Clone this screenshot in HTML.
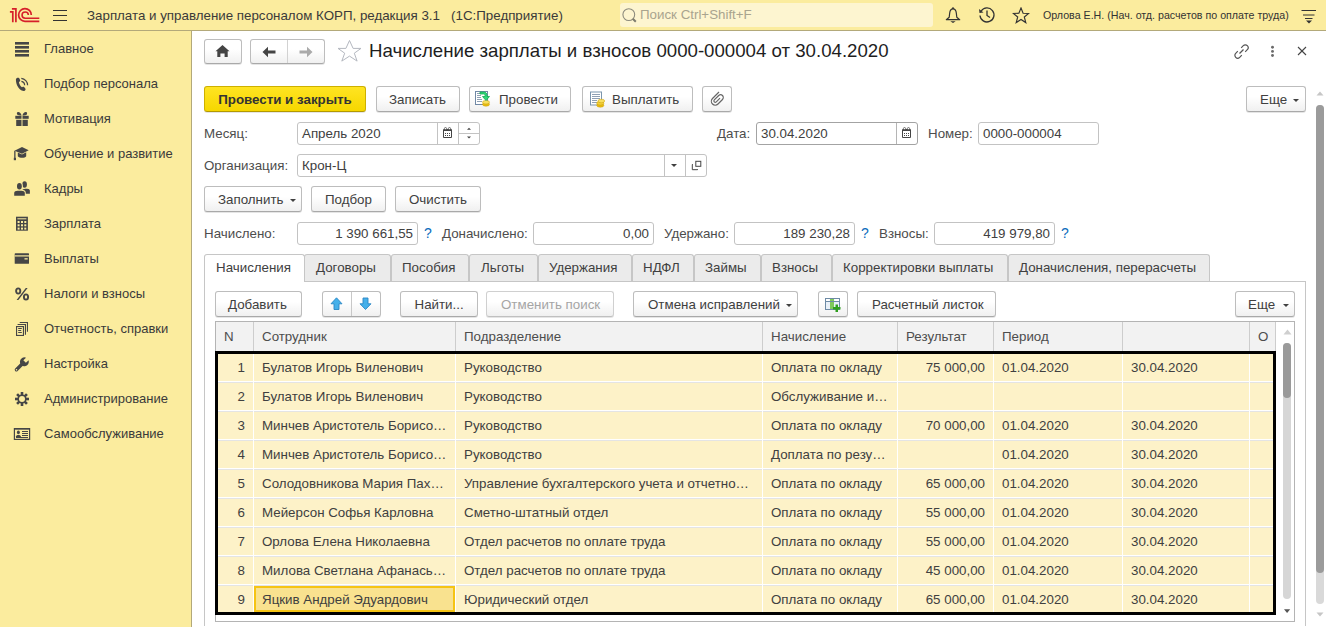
<!DOCTYPE html>
<html><head><meta charset="utf-8">
<style>
*{box-sizing:border-box}
html,body{margin:0;padding:0}
body{width:1326px;height:627px;overflow:hidden;position:relative;background:#fff;font-family:"Liberation Sans",sans-serif;font-size:13.33px;color:#4d4d4d}
.a{position:absolute}
.t{position:absolute;white-space:nowrap;line-height:15px;font-size:13.33px}
#hdr{left:0;top:0;width:1326px;height:31px;background:#fbec9e;border-bottom:1px solid #b3a97a}
#side{left:0;top:31px;width:192px;height:596px;background:#fbec9e;border-right:1px solid #b3a97a}
.btn{position:absolute;height:26px;border:1px solid #bdbdbd;border-bottom-color:#a9a9a9;border-radius:3px;background:linear-gradient(#ffffff 40%,#f0f0f0);box-shadow:0 1px 0 rgba(0,0,0,.10);color:#404040;white-space:nowrap;line-height:25px;text-align:left}
.btn2{height:26px;line-height:26px}
.fld{position:absolute;height:23px;border:1px solid #c3c3c3;border-radius:3px;background:#fff;color:#404040;line-height:21px;white-space:nowrap;padding:0 4px}
.lbl{position:absolute;white-space:nowrap;line-height:15px;color:#4d4d4d}
.q{position:absolute;color:#0b6cbc;line-height:15px;font-size:14px}
.tab{position:absolute;top:254px;height:27px;border:1px solid #c6c6c6;border-bottom:none;background:#ebebeb;border-radius:3px 3px 0 0}
.dv{position:absolute;width:1px;background:#d2d2d2}
.dd{position:absolute;width:0;height:0;border-left:3px solid transparent;border-right:3px solid transparent;border-top:3px solid #404040}
</style></head><body>

<!-- HEADER -->
<div id="hdr" class="a"></div>
<svg class="a" style="left:0px;top:0px" width="42" height="30" viewBox="0 0 42 30">
  <path d="M9.9 11.9 H12.8 V22.2 M11.9 8.8 H15.9 V22.2" fill="none" stroke="#d61f2a" stroke-width="1.7"/>
  <path d="M39.3 21.3 L25 21.3 A6.35 6.35 0 1 1 31.3 14.95" fill="none" stroke="#d61f2a" stroke-width="1.7"/>
  <path d="M39.3 18.25 L25.2 18.25 A3.15 3.15 0 1 1 28.35 15.1" fill="none" stroke="#d61f2a" stroke-width="1.6"/>
</svg>
<svg class="a" style="left:53px;top:9px" width="14" height="13"><g stroke="#333" stroke-width="1"><line x1="0" y1="1.5" x2="14" y2="1.5"/><line x1="0" y1="6.5" x2="14" y2="6.5"/><line x1="0" y1="11.5" x2="14" y2="11.5"/></g></svg>
<div class="t" style="left:87px;top:8px;color:#3a3a3a">Зарплата и управление персоналом КОРП, редакция 3.1&nbsp;&nbsp;&nbsp;(1С:Предприятие)</div>
<div class="a" style="left:620px;top:3px;width:313px;height:24px;background:#fdf5d0;border-radius:3px"></div>
<svg class="a" style="left:621px;top:7px" width="17" height="17"><circle cx="7.8" cy="7.6" r="5.9" fill="none" stroke="#8d8b7d" stroke-width="1.1"/><line x1="11.8" y1="11.8" x2="14.8" y2="14.8" stroke="#7d7b6d" stroke-width="2"/></svg>
<div class="t" style="left:640px;top:7px;color:#a9a48e">Поиск Ctrl+Shift+F</div>
<!-- bell -->
<svg class="a" style="left:945px;top:6px" width="17" height="18" viewBox="0 0 17 18"><path d="M8 2.8 C5.9 2.8 4.9 4.6 4.7 7 L4.2 11.3 L1.3 13.7 L14.7 13.7 L11.8 11.3 L11.3 7 C11.1 4.6 10.1 2.8 8 2.8 Z" fill="none" stroke="#333" stroke-width="1.2" stroke-linejoin="round"/><circle cx="8" cy="2.2" r="1" fill="#333"/><path d="M5.3 15.2 L10.7 15.2 L8 16.9 Z" fill="#333"/></svg>
<!-- history -->
<svg class="a" style="left:978px;top:6px" width="18" height="18" viewBox="0 0 18 18"><path d="M3.2 5 A7 7 0 1 1 2 9.5" fill="none" stroke="#333" stroke-width="1.3"/><path d="M1 3 L1.5 7 L5.5 6.5 Z" fill="#333"/><path d="M9 4.5 L9 9.5 L12 11.5" fill="none" stroke="#333" stroke-width="1.3"/></svg>
<!-- star -->
<svg class="a" style="left:1012px;top:7px" width="18" height="17" viewBox="0 0 18 17"><path d="M9 1 L11.1 6.2 L16.6 6.5 L12.3 10 L13.8 15.6 L9 12.5 L4.2 15.6 L5.7 10 L1.4 6.5 L6.9 6.2 Z" fill="none" stroke="#333" stroke-width="1.15" stroke-linejoin="miter"/></svg>
<div class="t" style="left:1043px;top:8px;color:#333;font-size:10.67px">Орлова Е.Н. (Нач. отд. расчетов по оплате труда)</div>
<svg class="a" style="left:1301px;top:9px" width="16" height="15"><g stroke="#333" stroke-width="1"><line x1="0.5" y1="1.5" x2="15" y2="1.5"/><line x1="2" y1="6" x2="13.5" y2="6"/><line x1="4" y1="9.5" x2="11.5" y2="9.5"/></g><path d="M5 11.5 L11 11.5 L8 14.5 Z" fill="#333"/></svg>

<!-- SIDEBAR -->
<div id="side" class="a"></div>
<div class="t" style="left:44px;top:41px;color:#3a3a3a;font-size:13px">Главное</div>
<svg class="a" style="left:15px;top:42px" width="17" height="16" viewBox="0 0 17 16" overflow="visible"><g fill="#464646"><rect x="0" y="0" width="14" height="2.6"/><rect x="0" y="4" width="14" height="2.6"/><rect x="0" y="8" width="14" height="2.6"/><rect x="0" y="12" width="14" height="2.6"/></g></svg>
<div class="t" style="left:44px;top:76px;color:#3a3a3a;font-size:13px">Подбор персонала</div>
<svg class="a" style="left:15px;top:77px" width="17" height="16" viewBox="0 0 17 16" overflow="visible"><path d="M0.9 2.4 C0.9 1.4 2.2 0.7 3.4 0.8 C4 0.9 4.3 1.2 4.5 1.7 L5.2 3.3 C5.4 3.9 5 4.5 4.4 4.8 L3.9 5.1 C4.2 7.2 5.3 9 6.9 10.3 L7.5 9.9 C8 9.6 8.7 9.6 9.1 10 L10.3 11.4 C10.8 12 10.6 12.9 10 13.4 C9.3 13.9 8.5 14 7.6 13.8 C3.6 12.2 0.9 7.4 0.9 2.4 Z" fill="#464646"/><path d="M6.3 1.3 A7 7 0 0 1 12.6 8.3 M6.4 4.3 A4 4 0 0 1 9.6 8.3" fill="none" stroke="#464646" stroke-width="1.2"/></svg>
<div class="t" style="left:44px;top:111px;color:#3a3a3a;font-size:13px">Мотивация</div>
<svg class="a" style="left:15px;top:112px" width="17" height="16" viewBox="0 0 17 16" overflow="visible"><g fill="#464646"><rect x="0.3" y="3.8" width="6.2" height="3"/><rect x="7.5" y="3.8" width="6.2" height="3"/><rect x="1.2" y="7.8" width="5.3" height="6.2"/><rect x="7.5" y="7.8" width="5.3" height="6.2"/><path d="M6.6 3.6 C6 1 4.5 -0.2 3 0 C1.8 0.2 1.6 1.6 2.2 2.5 C2.8 3.3 4.5 3.6 6.6 3.6 Z M7.4 3.6 C8 1 9.5 -0.2 11 0 C12.2 0.2 12.4 1.6 11.8 2.5 C11.2 3.3 9.5 3.6 7.4 3.6 Z"/></g></svg>
<div class="t" style="left:44px;top:146px;color:#3a3a3a;font-size:13px">Обучение и развитие</div>
<svg class="a" style="left:15px;top:147px" width="17" height="16" viewBox="0 0 17 16" overflow="visible"><g fill="#464646"><path d="M-0.5 3.8 L7 0 L13.7 3.2 L7 6.8 Z"/><path d="M2.8 5.5 L2.8 9.2 C4.5 11.2 10 11.2 11.2 9.2 L11.2 5.2 L7 7.6 Z"/><rect x="-0.8" y="3.8" width="1.3" height="7.5"/><rect x="-1.2" y="10.8" width="2.2" height="2.4"/></g></svg>
<div class="t" style="left:44px;top:181px;color:#3a3a3a;font-size:13px">Кадры</div>
<svg class="a" style="left:15px;top:182px" width="17" height="16" viewBox="0 0 17 16" overflow="visible"><g fill="#464646"><ellipse cx="9.6" cy="2.5" rx="2.3" ry="3.2"/><path d="M7.5 7.8 C9 6.5 13 6.5 14.3 7.4 C14.8 7.8 14.9 8.4 14.9 9 L14.9 11.8 L8 11.8 Z"/></g><g fill="#fbec9e" stroke="#fbec9e" stroke-width="2"><ellipse cx="4.4" cy="4.3" rx="2.4" ry="3.2"/><path d="M-0.8 11 C-0.8 9.6 0.7 8.7 2.5 8.7 L6.5 8.7 C8.3 8.7 9.8 9.6 9.8 11 L9.8 13.8 L-0.8 13.8 Z"/></g><g fill="#464646"><ellipse cx="4.4" cy="4.3" rx="2.4" ry="3.2"/><path d="M-0.8 11 C-0.8 9.6 0.7 8.7 2.5 8.7 L6.5 8.7 C8.3 8.7 9.8 9.6 9.8 11 L9.8 13.8 L-0.8 13.8 Z"/></g></svg>
<div class="t" style="left:44px;top:216px;color:#3a3a3a;font-size:13px">Зарплата</div>
<svg class="a" style="left:15px;top:217px" width="17" height="16" viewBox="0 0 17 16" overflow="visible"><g fill="#464646"><rect x="1" y="-0.3" width="11.9" height="14"/></g><g fill="#fbec9e"><rect x="2.4" y="1.3" width="9" height="1"/><rect x="2.6" y="4" width="2" height="2"/><rect x="6" y="4" width="2" height="2"/><rect x="9.3" y="4" width="2" height="2"/><rect x="2.6" y="7.3" width="2" height="2"/><rect x="6" y="7.3" width="2" height="2"/><rect x="9.3" y="7.3" width="2" height="2"/><rect x="2.6" y="10.6" width="2" height="2"/><rect x="6" y="10.6" width="2" height="2"/><rect x="9.3" y="10.6" width="2" height="2"/></g></svg>
<div class="t" style="left:44px;top:251px;color:#3a3a3a;font-size:13px">Выплаты</div>
<svg class="a" style="left:15px;top:252px" width="17" height="16" viewBox="0 0 17 16" overflow="visible"><g fill="#464646"><rect x="-0.3" y="1.3" width="14.3" height="10.5" rx="0.6"/></g><g fill="#fbec9e"><rect x="-0.3" y="3.3" width="14.3" height="1.2"/><rect x="9.5" y="6.2" width="3.2" height="1.3"/></g></svg>
<div class="t" style="left:44px;top:286px;color:#3a3a3a;font-size:13px">Налоги и взносы</div>
<svg class="a" style="left:15px;top:287px" width="17" height="16" viewBox="0 0 17 16" overflow="visible"><g fill="none" stroke="#464646" stroke-width="1.9"><ellipse cx="3.2" cy="4" rx="2.1" ry="2.6"/><ellipse cx="11" cy="10" rx="2.1" ry="2.6"/></g><path d="M10.8 1 L12.6 1 L3.4 13 L1.6 13 Z" fill="#464646"/></svg>
<div class="t" style="left:44px;top:321px;color:#3a3a3a;font-size:13px">Отчетность, справки</div>
<svg class="a" style="left:15px;top:322px" width="17" height="16" viewBox="0 0 17 16" overflow="visible"><g fill="none" stroke="#464646" stroke-width="1.1"><rect x="1.55" y="4.55" width="6.9" height="8.9"/><path d="M2.6 2.55 H10.45 V12.8 M4.7 0.55 H12.45 V9.8"/></g><g stroke="#464646" stroke-width="1"><path d="M3.2 6.5 H6.8 M3.2 8.5 H6.2 M3.2 10.5 H6.8"/></g></svg>
<div class="t" style="left:44px;top:356px;color:#3a3a3a;font-size:13px">Настройка</div>
<svg class="a" style="left:15px;top:357px" width="17" height="16" viewBox="0 0 17 16" overflow="visible"><g transform="translate(9.4 4.8) rotate(45)"><path d="M-1.8 -4.1 A4.5 4.5 0 1 0 1.8 -4.1 L1.8 -0.3 L-1.8 -0.3 Z" fill="#464646"/><rect x="-1.7" y="1.5" width="3.4" height="11.5" rx="1.7" fill="#464646"/><circle cx="0" cy="11.2" r="0.75" fill="#fbec9e"/></g></svg>
<div class="t" style="left:44px;top:391px;color:#3a3a3a;font-size:13px">Администрирование</div>
<svg class="a" style="left:15px;top:392px" width="17" height="16" viewBox="0 0 17 16" overflow="visible"><g transform="translate(7 7)"><g fill="#464646"><circle r="4.6"/><rect x="-1.3" y="-7" width="2.6" height="14"/><rect x="-1.3" y="-7" width="2.6" height="14" transform="rotate(45)"/><rect x="-1.3" y="-7" width="2.6" height="14" transform="rotate(90)"/><rect x="-1.3" y="-7" width="2.6" height="14" transform="rotate(135)"/></g><circle r="3.0" fill="#fbec9e"/></g></svg>
<div class="t" style="left:44px;top:426px;color:#3a3a3a;font-size:13px">Самообслуживание</div>
<svg class="a" style="left:15px;top:427px" width="17" height="16" viewBox="0 0 17 16" overflow="visible"><g fill="none" stroke="#464646" stroke-width="1.2"><rect x="-0.6" y="1.6" width="15.2" height="10.8"/></g><g fill="#464646"><rect x="-0.6" y="1" width="15.2" height="1.6"/><ellipse cx="3.4" cy="5.4" rx="1.5" ry="1.8"/><path d="M0.8 10 C0.8 7.4 6 7.4 6 10 Z"/><rect x="7" y="4" width="6" height="1"/><rect x="7" y="6" width="6" height="1"/><rect x="7" y="8" width="6" height="1"/><rect x="1" y="10" width="12" height="1"/></g></svg>

<!-- TITLE BAR -->
<div class="btn" style="left:204px;top:39px;width:38px;height:25px"></div>
<svg class="a" style="left:215px;top:44px" width="16" height="14" viewBox="0 0 16 14"><path d="M7.5 1 L14.5 7.2 L12.7 7.2 L12.7 13 L9.6 13 L9.6 9.6 L5.4 9.6 L5.4 13 L2.3 13 L2.3 7.2 L0.5 7.2 Z" fill="#444"/></svg>
<div class="btn" style="left:250px;top:39px;width:75px;height:25px"></div>
<div class="dv" style="left:287px;top:40px;height:23px"></div>
<svg class="a" style="left:262px;top:46px" width="14" height="12" viewBox="0 0 14 12"><path d="M0.5 6 L6 0.8 L6 4.5 L13.5 4.5 L13.5 7.5 L6 7.5 L6 11.2 Z" fill="#444"/></svg>
<svg class="a" style="left:299px;top:46px" width="14" height="12" viewBox="0 0 14 12"><path d="M13.5 6 L8 0.8 L8 4.5 L0.5 4.5 L0.5 7.5 L8 7.5 L8 11.2 Z" fill="#aaa"/></svg>
<svg class="a" style="left:337px;top:39px" width="26" height="24" viewBox="0 0 26 24"><path d="M12.5 1.5 L16.1 9.4 L24 9.4 L17.3 14.2 L20.1 22.1 L12.5 17.1 L4.8 22.1 L7.7 14.2 L1 9.4 L8.9 9.4 Z" fill="none" stroke="#b4b8c0" stroke-width="1" stroke-linejoin="miter"/></svg>
<div class="t" style="left:369px;top:40px;font-size:18.67px;line-height:22px;color:#1e1e1e">Начисление зарплаты и взносов 0000-000004 от 30.04.2020</div>
<!-- link icon -->
<svg class="a" style="left:1233px;top:43px" width="17" height="17" viewBox="0 0 17 17"><g fill="none" stroke="#555" stroke-width="1.2"><path d="M6.5 10.5 L10.5 6.5"/><path d="M8.2 4.8 L10.3 2.7 A2.7 2.7 0 0 1 14.3 6.7 L12.2 8.8"/><path d="M4.8 8.2 L2.7 10.3 A2.7 2.7 0 0 0 6.7 14.3 L8.8 12.2"/></g></svg>
<svg class="a" style="left:1270px;top:45px" width="5" height="13"><circle cx="2.5" cy="2.3" r="1.45" fill="#6a6a6a"/><circle cx="2.5" cy="6.4" r="1.45" fill="#6a6a6a"/><circle cx="2.5" cy="10.5" r="1.45" fill="#6a6a6a"/></svg>
<svg class="a" style="left:1297px;top:46px" width="10" height="10"><g stroke="#444" stroke-width="1.1"><line x1="1" y1="1" x2="9" y2="9"/><line x1="9" y1="1" x2="1" y2="9"/></g></svg>

<!-- MAIN TOOLBAR -->
<div class="btn" style="left:204px;top:86px;width:162px;background:linear-gradient(#ffe422,#f6d700);border-color:#cdb000;border-bottom-color:#b39900;color:#333;font-weight:bold;text-align:center">Провести и закрыть</div>
<div class="btn" style="left:376px;top:86px;width:84px;padding-left:12px">Записать</div>
<div class="btn" style="left:469px;top:86px;width:102px;padding-left:29px">Провести</div>
<svg class="a" style="left:474px;top:90px" width="18" height="18" viewBox="0 0 18 18">
  <rect x="1.5" y="1.5" width="12" height="13" fill="#fff" stroke="#7189a6" stroke-width="1"/>
  <g stroke="#8fa0b3" stroke-width="1"><line x1="3" y1="3.5" x2="6" y2="3.5"/><line x1="3" y1="5.5" x2="7" y2="5.5"/><line x1="3" y1="7.5" x2="7" y2="7.5"/><line x1="3" y1="9.5" x2="8" y2="9.5"/><line x1="3" y1="11.5" x2="8" y2="11.5"/></g>
  <ellipse cx="12" cy="14.3" rx="3.5" ry="1.9" fill="#e9bd12" stroke="#c99a00" stroke-width="0.5"/><ellipse cx="12" cy="12.2" rx="3.5" ry="1.8" fill="#f8df5e" stroke="#c99a00" stroke-width="0.5"/>
  <path d="M6 2 L9.5 2 C12 2 13 3.5 13 5.5 L13 6.5 L15.5 6.5 L12 10.5 L8.5 6.5 L11 6.5 L11 5.5 C11 4.5 10.5 4 9.5 4 L6 4 Z" fill="#2ed87a" stroke="#14a850" stroke-width="0.8"/>
</svg>
<div class="btn" style="left:582px;top:86px;width:111px;padding-left:29px">Выплатить</div>
<svg class="a" style="left:589px;top:91px" width="18" height="18" viewBox="0 0 18 18">
  <rect x="1.5" y="1" width="11" height="13" fill="#fff" stroke="#7b95ad" stroke-width="1"/>
  <g stroke="#8fa0b3" stroke-width="1"><line x1="3" y1="3.5" x2="11" y2="3.5"/><line x1="3" y1="5.5" x2="11" y2="5.5"/><line x1="3" y1="7.5" x2="11" y2="7.5"/><line x1="3" y1="9.5" x2="8" y2="9.5"/><line x1="3" y1="11.5" x2="8" y2="11.5"/></g>
  <ellipse cx="11.3" cy="14.3" rx="3.6" ry="1.9" fill="#e9bd12" stroke="#c99a00" stroke-width="0.5"/><ellipse cx="11.3" cy="12.2" rx="3.6" ry="1.9" fill="#f3d03a" stroke="#c99a00" stroke-width="0.5"/><ellipse cx="12.3" cy="10" rx="3.4" ry="1.8" fill="#f8df5e" stroke="#c99a00" stroke-width="0.5"/>
</svg>
<div class="btn" style="left:702px;top:86px;width:30px"></div>
<svg class="a" style="left:709px;top:90px" width="16" height="17" viewBox="0 0 16 17"><path d="M10 2 L3.5 8.5 C2 10 2 12.5 3.5 14 C5 15.5 7.5 15.5 9 14 L13.5 9.5 C14.5 8.5 14.5 6.5 13.5 5.5 C12.5 4.5 10.7 4.5 9.7 5.5 L5.3 9.9 C4.8 10.4 4.8 11.4 5.3 11.9 C5.8 12.4 6.8 12.4 7.3 11.9 L11 8.2" fill="none" stroke="#666" stroke-width="1.2"/></svg>
<div class="btn" style="left:1246px;top:86px;width:60px;padding-left:13px">Еще</div>
<div class="dd" style="left:1293px;top:99px"></div>

<!-- MONTH ROW -->
<div class="lbl" style="left:204px;top:126px">Месяц:</div>
<div class="fld" style="left:297px;top:122px;width:183px">Апрель 2020</div>
<div class="dv" style="left:437px;top:123px;height:21px;background:#c3c3c3"></div>
<div class="dv" style="left:458px;top:123px;height:21px;background:#c3c3c3"></div>
<div class="a" style="left:459px;top:133px;width:20px;height:1px;background:#c3c3c3"></div>
<svg class="a" style="left:443px;top:127px" width="10" height="11" viewBox="0 0 10 11"><path d="M1 2 H8 A1 1 0 0 1 9 3 V10 A1 1 0 0 1 8 11 H1 A1 1 0 0 1 0 10 V3 A1 1 0 0 1 1 2 Z" fill="#454545"/><rect x="1" y="4" width="7" height="6" fill="#fff"/><g fill="#454545"><rect x="2" y="6" width="1" height="1"/><rect x="4" y="6" width="1" height="1"/><rect x="6" y="6" width="1" height="1"/><rect x="2" y="8" width="1" height="1"/><rect x="4" y="8" width="1" height="1"/><rect x="6" y="8" width="1" height="1"/></g><circle cx="2.5" cy="1.6" r="1.1" fill="#fff" stroke="#454545" stroke-width="0.7"/><circle cx="6.5" cy="1.6" r="1.1" fill="#fff" stroke="#454545" stroke-width="0.7"/></svg>
<svg class="a" style="left:466px;top:127px" width="6" height="12"><path d="M1 2.8 L3 0.8 L5 2.8 Z M1 9.5 L3 11.5 L5 9.5 Z" fill="#444"/></svg>
<div class="lbl" style="left:717px;top:126px">Дата:</div>
<div class="fld" style="left:756px;top:122px;width:162px;border-color:#a3a3a3">30.04.2020</div>
<div class="dv" style="left:896px;top:123px;height:21px;background:#b5b5b5"></div>
<svg class="a" style="left:902px;top:127px" width="10" height="11" viewBox="0 0 10 11"><path d="M1 2 H8 A1 1 0 0 1 9 3 V10 A1 1 0 0 1 8 11 H1 A1 1 0 0 1 0 10 V3 A1 1 0 0 1 1 2 Z" fill="#454545"/><rect x="1" y="4" width="7" height="6" fill="#fff"/><g fill="#454545"><rect x="2" y="6" width="1" height="1"/><rect x="4" y="6" width="1" height="1"/><rect x="6" y="6" width="1" height="1"/><rect x="2" y="8" width="1" height="1"/><rect x="4" y="8" width="1" height="1"/><rect x="6" y="8" width="1" height="1"/></g><circle cx="2.5" cy="1.6" r="1.1" fill="#fff" stroke="#454545" stroke-width="0.7"/><circle cx="6.5" cy="1.6" r="1.1" fill="#fff" stroke="#454545" stroke-width="0.7"/></svg>
<div class="lbl" style="left:928px;top:126px">Номер:</div>
<div class="fld" style="left:978px;top:122px;width:121px">0000-000004</div>

<!-- ORG ROW -->
<div class="lbl" style="left:204px;top:158px">Организация:</div>
<div class="fld" style="left:297px;top:154px;width:410px">Крон-Ц</div>
<div class="dv" style="left:664px;top:155px;height:21px;background:#c3c3c3"></div>
<div class="dv" style="left:685px;top:155px;height:21px;background:#c3c3c3"></div>
<div class="dd" style="left:671px;top:164px"></div>
<svg class="a" style="left:691px;top:160px" width="11" height="11" viewBox="0 0 11 11"><rect x="4.8" y="1.3" width="5" height="5" fill="none" stroke="#444" stroke-width="1"/><path d="M2 4.5 H1.3 V9.7 H6.5 V9" fill="none" stroke="#444" stroke-width="1"/></svg>

<!-- FILL BUTTONS -->
<div class="btn" style="left:204px;top:186px;width:98px;padding-left:13px">Заполнить</div>
<div class="dd" style="left:290px;top:199px"></div>
<div class="btn" style="left:311px;top:186px;width:75px;padding-left:13px">Подбор</div>
<div class="btn" style="left:395px;top:186px;width:86px;padding-left:13px">Очистить</div>

<!-- TOTALS -->
<div class="lbl" style="left:204px;top:226px">Начислено:</div>
<div class="fld" style="left:297px;top:222px;width:121px;text-align:right">1 390 661,55</div>
<div class="q" style="left:424px;top:226px">?</div>
<div class="lbl" style="left:442px;top:226px">Доначислено:</div>
<div class="fld" style="left:533px;top:222px;width:121px;text-align:right">0,00</div>
<div class="lbl" style="left:664px;top:226px">Удержано:</div>
<div class="fld" style="left:734px;top:222px;width:121px;text-align:right">189 230,28</div>
<div class="q" style="left:861px;top:226px">?</div>
<div class="lbl" style="left:879px;top:226px">Взносы:</div>
<div class="fld" style="left:934px;top:222px;width:121px;text-align:right">419 979,80</div>
<div class="q" style="left:1061px;top:226px">?</div>

<!-- TABS -->
<div class="a" style="left:204px;top:281px;width:1102px;height:345px;border:1px solid #c6c6c6;border-bottom:none"></div>
<div class="tab" style="left:304px;width:87px"></div>
<div class="t" style="left:316px;top:260px;color:#404040">Договоры</div>
<div class="tab" style="left:391px;width:78px"></div>
<div class="t" style="left:402px;top:260px;color:#404040">Пособия</div>
<div class="tab" style="left:469px;width:69px"></div>
<div class="t" style="left:481px;top:260px;color:#404040">Льготы</div>
<div class="tab" style="left:538px;width:94px"></div>
<div class="t" style="left:549px;top:260px;color:#404040">Удержания</div>
<div class="tab" style="left:632px;width:62px"></div>
<div class="t" style="left:643px;top:260px;color:#404040">НДФЛ</div>
<div class="tab" style="left:694px;width:67px"></div>
<div class="t" style="left:705px;top:260px;color:#404040">Займы</div>
<div class="tab" style="left:761px;width:71px"></div>
<div class="t" style="left:772px;top:260px;color:#404040">Взносы</div>
<div class="tab" style="left:832px;width:176px"></div>
<div class="t" style="left:843px;top:260px;color:#404040">Корректировки выплаты</div>
<div class="tab" style="left:1008px;width:202px"></div>
<div class="t" style="left:1019px;top:260px;color:#404040">Доначисления, перерасчеты</div>
<div class="tab" style="left:204px;width:101px;height:28px;background:#fff"></div>
<div class="t" style="left:216px;top:260px;color:#404040">Начисления</div>

<!-- TABLE TOOLBAR -->
<div class="btn btn2" style="left:215px;top:291px;width:87px;padding-left:12px">Добавить</div>
<div class="btn btn2" style="left:322px;top:291px;width:59px"></div>
<div class="dv" style="left:351px;top:292px;height:24px;background:#c8c8c8"></div>
<svg class="a" style="left:330px;top:297px" width="14" height="14" viewBox="0 0 14 14"><path d="M6.5 0.8 L12 6.8 L9 6.8 L9 12.5 L4 12.5 L4 6.8 L1 6.8 Z" fill="#45b0ea" stroke="#2a87c5" stroke-width="0.9" stroke-linejoin="miter"/></svg>
<svg class="a" style="left:359px;top:297px" width="14" height="14" viewBox="0 0 14 14"><path d="M6.5 12.5 L12 6.8 L9 6.8 L9 1 L4 1 L4 6.8 L1 6.8 Z" fill="#45b0ea" stroke="#2a87c5" stroke-width="0.9" stroke-linejoin="miter"/></svg>
<div class="btn btn2" style="left:400px;top:291px;width:78px;padding-left:13.5px">Найти...</div>
<div class="btn btn2" style="left:486px;top:291px;width:128px;padding-left:14px;color:#a5a5a5;border-color:#d0d0d0;border-bottom-color:#c0c0c0">Отменить поиск</div>
<div class="btn btn2" style="left:633px;top:291px;width:165px;padding-left:14px">Отмена исправлений</div>
<div class="dd" style="left:786px;top:304px"></div>
<div class="btn btn2" style="left:818px;top:291px;width:30px"></div>
<svg class="a" style="left:824px;top:297px" width="18" height="16" viewBox="0 0 18 16"><rect x="1.5" y="1.5" width="14" height="11" fill="#e8f0f8" stroke="#6d8aa5" stroke-width="1"/><rect x="6" y="2" width="4" height="10" fill="#7ec95a"/><line x1="1.5" y1="4.5" x2="15.5" y2="4.5" stroke="#6d8aa5" stroke-width="1"/><rect x="2" y="2" width="3.5" height="2" fill="#fff"/><rect x="10.5" y="2" width="4.5" height="2" fill="#fff"/><path d="M11.5 7.5 H14 V10 H16.5 V12.5 H14 V15 H11.5 V12.5 H9 V10 H11.5 Z" fill="#2e9e1e"/></svg>
<div class="btn btn2" style="left:857px;top:291px;width:139px;padding-left:14px">Расчетный листок</div>
<div class="btn btn2" style="left:1235px;top:291px;width:60px;padding-left:12px">Еще</div>
<div class="dd" style="left:1283px;top:304px"></div>

<!-- TABLE -->
<div class="a" style="left:215px;top:321px;height:301px;border:1px solid #b4b4b4;width:1080px"></div>
<div class="a" style="left:216px;top:322px;width:1059px;height:29px;background:#f2f2f2"></div>
<div class="a" style="left:1275px;top:322px;width:1px;height:29px;background:#d4d4d4"></div>
<div class="a" style="left:253px;top:322px;width:1px;height:29px;background:#cdcdcd"></div>
<div class="t" style="left:224px;top:329px">N</div>
<div class="a" style="left:455px;top:322px;width:1px;height:29px;background:#cdcdcd"></div>
<div class="t" style="left:262px;top:329px">Сотрудник</div>
<div class="a" style="left:762px;top:322px;width:1px;height:29px;background:#cdcdcd"></div>
<div class="t" style="left:464px;top:329px">Подразделение</div>
<div class="a" style="left:897px;top:322px;width:1px;height:29px;background:#cdcdcd"></div>
<div class="t" style="left:771px;top:329px">Начисление</div>
<div class="a" style="left:993px;top:322px;width:1px;height:29px;background:#cdcdcd"></div>
<div class="t" style="left:906px;top:329px">Результат</div>
<div class="a" style="left:1122px;top:322px;width:1px;height:29px;background:#cdcdcd"></div>
<div class="t" style="left:1002px;top:329px">Период</div>
<div class="a" style="left:1249px;top:322px;width:1px;height:29px;background:#cdcdcd"></div>
<div class="a" style="left:1275px;top:322px;width:1px;height:29px;background:#cdcdcd"></div>
<div class="t" style="left:1258px;top:329px">О</div>
<div class="a" style="left:216px;top:354px;width:1059px;height:27px;background:#fdf2c8"></div>
<div class="a" style="left:216px;top:381px;width:1059px;height:1px;background:#ffffff"></div>
<div class="a" style="left:216px;top:382px;width:1059px;height:1px;background:#e4e4e4"></div>
<div class="a" style="left:253px;top:354px;width:1px;height:29px;background:#ffffff"></div>
<div class="a" style="left:455px;top:354px;width:1px;height:29px;background:#ffffff"></div>
<div class="a" style="left:762px;top:354px;width:1px;height:29px;background:#ffffff"></div>
<div class="a" style="left:897px;top:354px;width:1px;height:29px;background:#ffffff"></div>
<div class="a" style="left:993px;top:354px;width:1px;height:29px;background:#ffffff"></div>
<div class="a" style="left:1122px;top:354px;width:1px;height:29px;background:#ffffff"></div>
<div class="a" style="left:1249px;top:354px;width:1px;height:29px;background:#ffffff"></div>
<div class="a" style="left:1275px;top:354px;width:1px;height:29px;background:#ffffff"></div>
<div class="t" style="left:216px;width:29px;text-align:right;top:360px;color:#404040">1</div>
<div class="t" style="left:262px;top:360px;color:#404040">Булатов Игорь Виленович</div>
<div class="t" style="left:464px;top:360px;color:#404040">Руководство</div>
<div class="t" style="left:771px;top:360px;color:#404040">Оплата по окладу</div>
<div class="t" style="left:897px;width:88px;text-align:right;top:360px;color:#404040">75 000,00</div>
<div class="t" style="left:1002px;top:360px;color:#404040">01.04.2020</div>
<div class="t" style="left:1131px;top:360px;color:#404040">30.04.2020</div>
<div class="a" style="left:216px;top:383px;width:1059px;height:27px;background:#fdf2c8"></div>
<div class="a" style="left:216px;top:410px;width:1059px;height:1px;background:#ffffff"></div>
<div class="a" style="left:216px;top:411px;width:1059px;height:1px;background:#e4e4e4"></div>
<div class="a" style="left:253px;top:383px;width:1px;height:29px;background:#ffffff"></div>
<div class="a" style="left:455px;top:383px;width:1px;height:29px;background:#ffffff"></div>
<div class="a" style="left:762px;top:383px;width:1px;height:29px;background:#ffffff"></div>
<div class="a" style="left:897px;top:383px;width:1px;height:29px;background:#ffffff"></div>
<div class="a" style="left:993px;top:383px;width:1px;height:29px;background:#ffffff"></div>
<div class="a" style="left:1122px;top:383px;width:1px;height:29px;background:#ffffff"></div>
<div class="a" style="left:1249px;top:383px;width:1px;height:29px;background:#ffffff"></div>
<div class="a" style="left:1275px;top:383px;width:1px;height:29px;background:#ffffff"></div>
<div class="t" style="left:216px;width:29px;text-align:right;top:389px;color:#404040">2</div>
<div class="t" style="left:262px;top:389px;color:#404040">Булатов Игорь Виленович</div>
<div class="t" style="left:464px;top:389px;color:#404040">Руководство</div>
<div class="t" style="left:771px;top:389px;color:#404040">Обслуживание и…</div>
<div class="a" style="left:216px;top:412px;width:1059px;height:27px;background:#fdf2c8"></div>
<div class="a" style="left:216px;top:439px;width:1059px;height:1px;background:#ffffff"></div>
<div class="a" style="left:216px;top:440px;width:1059px;height:1px;background:#e4e4e4"></div>
<div class="a" style="left:253px;top:412px;width:1px;height:29px;background:#ffffff"></div>
<div class="a" style="left:455px;top:412px;width:1px;height:29px;background:#ffffff"></div>
<div class="a" style="left:762px;top:412px;width:1px;height:29px;background:#ffffff"></div>
<div class="a" style="left:897px;top:412px;width:1px;height:29px;background:#ffffff"></div>
<div class="a" style="left:993px;top:412px;width:1px;height:29px;background:#ffffff"></div>
<div class="a" style="left:1122px;top:412px;width:1px;height:29px;background:#ffffff"></div>
<div class="a" style="left:1249px;top:412px;width:1px;height:29px;background:#ffffff"></div>
<div class="a" style="left:1275px;top:412px;width:1px;height:29px;background:#ffffff"></div>
<div class="t" style="left:216px;width:29px;text-align:right;top:418px;color:#404040">3</div>
<div class="t" style="left:262px;top:418px;color:#404040">Минчев Аристотель Борисо…</div>
<div class="t" style="left:464px;top:418px;color:#404040">Руководство</div>
<div class="t" style="left:771px;top:418px;color:#404040">Оплата по окладу</div>
<div class="t" style="left:897px;width:88px;text-align:right;top:418px;color:#404040">70 000,00</div>
<div class="t" style="left:1002px;top:418px;color:#404040">01.04.2020</div>
<div class="t" style="left:1131px;top:418px;color:#404040">30.04.2020</div>
<div class="a" style="left:216px;top:441px;width:1059px;height:27px;background:#fdf2c8"></div>
<div class="a" style="left:216px;top:468px;width:1059px;height:1px;background:#ffffff"></div>
<div class="a" style="left:216px;top:469px;width:1059px;height:1px;background:#e4e4e4"></div>
<div class="a" style="left:253px;top:441px;width:1px;height:29px;background:#ffffff"></div>
<div class="a" style="left:455px;top:441px;width:1px;height:29px;background:#ffffff"></div>
<div class="a" style="left:762px;top:441px;width:1px;height:29px;background:#ffffff"></div>
<div class="a" style="left:897px;top:441px;width:1px;height:29px;background:#ffffff"></div>
<div class="a" style="left:993px;top:441px;width:1px;height:29px;background:#ffffff"></div>
<div class="a" style="left:1122px;top:441px;width:1px;height:29px;background:#ffffff"></div>
<div class="a" style="left:1249px;top:441px;width:1px;height:29px;background:#ffffff"></div>
<div class="a" style="left:1275px;top:441px;width:1px;height:29px;background:#ffffff"></div>
<div class="t" style="left:216px;width:29px;text-align:right;top:447px;color:#404040">4</div>
<div class="t" style="left:262px;top:447px;color:#404040">Минчев Аристотель Борисо…</div>
<div class="t" style="left:464px;top:447px;color:#404040">Руководство</div>
<div class="t" style="left:771px;top:447px;color:#404040">Доплата по резу…</div>
<div class="t" style="left:1002px;top:447px;color:#404040">01.04.2020</div>
<div class="t" style="left:1131px;top:447px;color:#404040">30.04.2020</div>
<div class="a" style="left:216px;top:470px;width:1059px;height:27px;background:#fdf2c8"></div>
<div class="a" style="left:216px;top:497px;width:1059px;height:1px;background:#ffffff"></div>
<div class="a" style="left:216px;top:498px;width:1059px;height:1px;background:#e4e4e4"></div>
<div class="a" style="left:253px;top:470px;width:1px;height:29px;background:#ffffff"></div>
<div class="a" style="left:455px;top:470px;width:1px;height:29px;background:#ffffff"></div>
<div class="a" style="left:762px;top:470px;width:1px;height:29px;background:#ffffff"></div>
<div class="a" style="left:897px;top:470px;width:1px;height:29px;background:#ffffff"></div>
<div class="a" style="left:993px;top:470px;width:1px;height:29px;background:#ffffff"></div>
<div class="a" style="left:1122px;top:470px;width:1px;height:29px;background:#ffffff"></div>
<div class="a" style="left:1249px;top:470px;width:1px;height:29px;background:#ffffff"></div>
<div class="a" style="left:1275px;top:470px;width:1px;height:29px;background:#ffffff"></div>
<div class="t" style="left:216px;width:29px;text-align:right;top:476px;color:#404040">5</div>
<div class="t" style="left:262px;top:476px;color:#404040">Солодовникова Мария Пах…</div>
<div class="t" style="left:464px;top:476px;color:#404040">Управление бухгалтерского учета и отчетно…</div>
<div class="t" style="left:771px;top:476px;color:#404040">Оплата по окладу</div>
<div class="t" style="left:897px;width:88px;text-align:right;top:476px;color:#404040">65 000,00</div>
<div class="t" style="left:1002px;top:476px;color:#404040">01.04.2020</div>
<div class="t" style="left:1131px;top:476px;color:#404040">30.04.2020</div>
<div class="a" style="left:216px;top:499px;width:1059px;height:27px;background:#fdf2c8"></div>
<div class="a" style="left:216px;top:526px;width:1059px;height:1px;background:#ffffff"></div>
<div class="a" style="left:216px;top:527px;width:1059px;height:1px;background:#e4e4e4"></div>
<div class="a" style="left:253px;top:499px;width:1px;height:29px;background:#ffffff"></div>
<div class="a" style="left:455px;top:499px;width:1px;height:29px;background:#ffffff"></div>
<div class="a" style="left:762px;top:499px;width:1px;height:29px;background:#ffffff"></div>
<div class="a" style="left:897px;top:499px;width:1px;height:29px;background:#ffffff"></div>
<div class="a" style="left:993px;top:499px;width:1px;height:29px;background:#ffffff"></div>
<div class="a" style="left:1122px;top:499px;width:1px;height:29px;background:#ffffff"></div>
<div class="a" style="left:1249px;top:499px;width:1px;height:29px;background:#ffffff"></div>
<div class="a" style="left:1275px;top:499px;width:1px;height:29px;background:#ffffff"></div>
<div class="t" style="left:216px;width:29px;text-align:right;top:505px;color:#404040">6</div>
<div class="t" style="left:262px;top:505px;color:#404040">Мейерсон Софья Карловна</div>
<div class="t" style="left:464px;top:505px;color:#404040">Сметно-штатный отдел</div>
<div class="t" style="left:771px;top:505px;color:#404040">Оплата по окладу</div>
<div class="t" style="left:897px;width:88px;text-align:right;top:505px;color:#404040">55 000,00</div>
<div class="t" style="left:1002px;top:505px;color:#404040">01.04.2020</div>
<div class="t" style="left:1131px;top:505px;color:#404040">30.04.2020</div>
<div class="a" style="left:216px;top:528px;width:1059px;height:27px;background:#fdf2c8"></div>
<div class="a" style="left:216px;top:555px;width:1059px;height:1px;background:#ffffff"></div>
<div class="a" style="left:216px;top:556px;width:1059px;height:1px;background:#e4e4e4"></div>
<div class="a" style="left:253px;top:528px;width:1px;height:29px;background:#ffffff"></div>
<div class="a" style="left:455px;top:528px;width:1px;height:29px;background:#ffffff"></div>
<div class="a" style="left:762px;top:528px;width:1px;height:29px;background:#ffffff"></div>
<div class="a" style="left:897px;top:528px;width:1px;height:29px;background:#ffffff"></div>
<div class="a" style="left:993px;top:528px;width:1px;height:29px;background:#ffffff"></div>
<div class="a" style="left:1122px;top:528px;width:1px;height:29px;background:#ffffff"></div>
<div class="a" style="left:1249px;top:528px;width:1px;height:29px;background:#ffffff"></div>
<div class="a" style="left:1275px;top:528px;width:1px;height:29px;background:#ffffff"></div>
<div class="t" style="left:216px;width:29px;text-align:right;top:534px;color:#404040">7</div>
<div class="t" style="left:262px;top:534px;color:#404040">Орлова Елена Николаевна</div>
<div class="t" style="left:464px;top:534px;color:#404040">Отдел расчетов по оплате труда</div>
<div class="t" style="left:771px;top:534px;color:#404040">Оплата по окладу</div>
<div class="t" style="left:897px;width:88px;text-align:right;top:534px;color:#404040">55 000,00</div>
<div class="t" style="left:1002px;top:534px;color:#404040">01.04.2020</div>
<div class="t" style="left:1131px;top:534px;color:#404040">30.04.2020</div>
<div class="a" style="left:216px;top:557px;width:1059px;height:27px;background:#fdf2c8"></div>
<div class="a" style="left:216px;top:584px;width:1059px;height:1px;background:#ffffff"></div>
<div class="a" style="left:216px;top:585px;width:1059px;height:1px;background:#e4e4e4"></div>
<div class="a" style="left:253px;top:557px;width:1px;height:29px;background:#ffffff"></div>
<div class="a" style="left:455px;top:557px;width:1px;height:29px;background:#ffffff"></div>
<div class="a" style="left:762px;top:557px;width:1px;height:29px;background:#ffffff"></div>
<div class="a" style="left:897px;top:557px;width:1px;height:29px;background:#ffffff"></div>
<div class="a" style="left:993px;top:557px;width:1px;height:29px;background:#ffffff"></div>
<div class="a" style="left:1122px;top:557px;width:1px;height:29px;background:#ffffff"></div>
<div class="a" style="left:1249px;top:557px;width:1px;height:29px;background:#ffffff"></div>
<div class="a" style="left:1275px;top:557px;width:1px;height:29px;background:#ffffff"></div>
<div class="t" style="left:216px;width:29px;text-align:right;top:563px;color:#404040">8</div>
<div class="t" style="left:262px;top:563px;color:#404040">Милова Светлана Афанась…</div>
<div class="t" style="left:464px;top:563px;color:#404040">Отдел расчетов по оплате труда</div>
<div class="t" style="left:771px;top:563px;color:#404040">Оплата по окладу</div>
<div class="t" style="left:897px;width:88px;text-align:right;top:563px;color:#404040">45 000,00</div>
<div class="t" style="left:1002px;top:563px;color:#404040">01.04.2020</div>
<div class="t" style="left:1131px;top:563px;color:#404040">30.04.2020</div>
<div class="a" style="left:216px;top:586px;width:1059px;height:27px;background:#fdf2c8"></div>
<div class="a" style="left:216px;top:613px;width:1059px;height:1px;background:#ffffff"></div>
<div class="a" style="left:216px;top:614px;width:1059px;height:1px;background:#e4e4e4"></div>
<div class="a" style="left:253px;top:586px;width:1px;height:29px;background:#ffffff"></div>
<div class="a" style="left:455px;top:586px;width:1px;height:29px;background:#ffffff"></div>
<div class="a" style="left:762px;top:586px;width:1px;height:29px;background:#ffffff"></div>
<div class="a" style="left:897px;top:586px;width:1px;height:29px;background:#ffffff"></div>
<div class="a" style="left:993px;top:586px;width:1px;height:29px;background:#ffffff"></div>
<div class="a" style="left:1122px;top:586px;width:1px;height:29px;background:#ffffff"></div>
<div class="a" style="left:1249px;top:586px;width:1px;height:29px;background:#ffffff"></div>
<div class="a" style="left:1275px;top:586px;width:1px;height:29px;background:#ffffff"></div>
<div class="t" style="left:216px;width:29px;text-align:right;top:592px;color:#404040">9</div>
<div class="t" style="left:262px;top:592px;color:#404040">Яцкив Андрей Эдуардович</div>
<div class="t" style="left:464px;top:592px;color:#404040">Юридический отдел</div>
<div class="t" style="left:771px;top:592px;color:#404040">Оплата по окладу</div>
<div class="t" style="left:897px;width:88px;text-align:right;top:592px;color:#404040">65 000,00</div>
<div class="t" style="left:1002px;top:592px;color:#404040">01.04.2020</div>
<div class="t" style="left:1131px;top:592px;color:#404040">30.04.2020</div>
<div class="a" style="left:254px;top:586px;width:201px;height:26px;background:#f9e28f;border:2px solid #f5c414"></div>
<div class="t" style="left:262px;top:592px;color:#404040">Яцкив Андрей Эдуардович</div>
<div class="a" style="left:215px;top:351px;width:1061px;height:264px;border:3px solid #000"></div>
<div class="a" style="left:1283px;top:343px;width:8px;height:256px;background:#d6d6d6;border-radius:4px"></div>
<div class="a" style="left:1283px;top:343px;width:8px;height:55px;background:#9a9a9a;border-radius:4px"></div>
<svg class="a" style="left:1283px;top:329px" width="9" height="6"><path d="M0.5 5.5 L4.5 0.5 L8.5 5.5 Z" fill="#cfcfcf"/></svg>
<svg class="a" style="left:1283px;top:609px" width="9" height="5"><path d="M1 0.3 L7.2 0.3 L4.1 4 Z" fill="#555"/></svg>

<!-- OUTER SCROLLBAR -->
<svg class="a" style="left:1316px;top:91px" width="8" height="5"><path d="M0.5 4.5 L4 0.5 L7.5 4.5 Z" fill="#c6c6c6"/></svg>
<div class="a" style="left:1316px;top:105px;width:8px;height:499px;background:#d9d9d9;border-radius:4px"></div>
<div class="a" style="left:1316px;top:105px;width:8px;height:468px;background:#9b9b9b;border-radius:4px"></div>
<svg class="a" style="left:1316px;top:612px" width="8" height="5"><path d="M0.5 0.5 L4 4.5 L7.5 0.5 Z" fill="#c6c6c6"/></svg>

</body></html>
